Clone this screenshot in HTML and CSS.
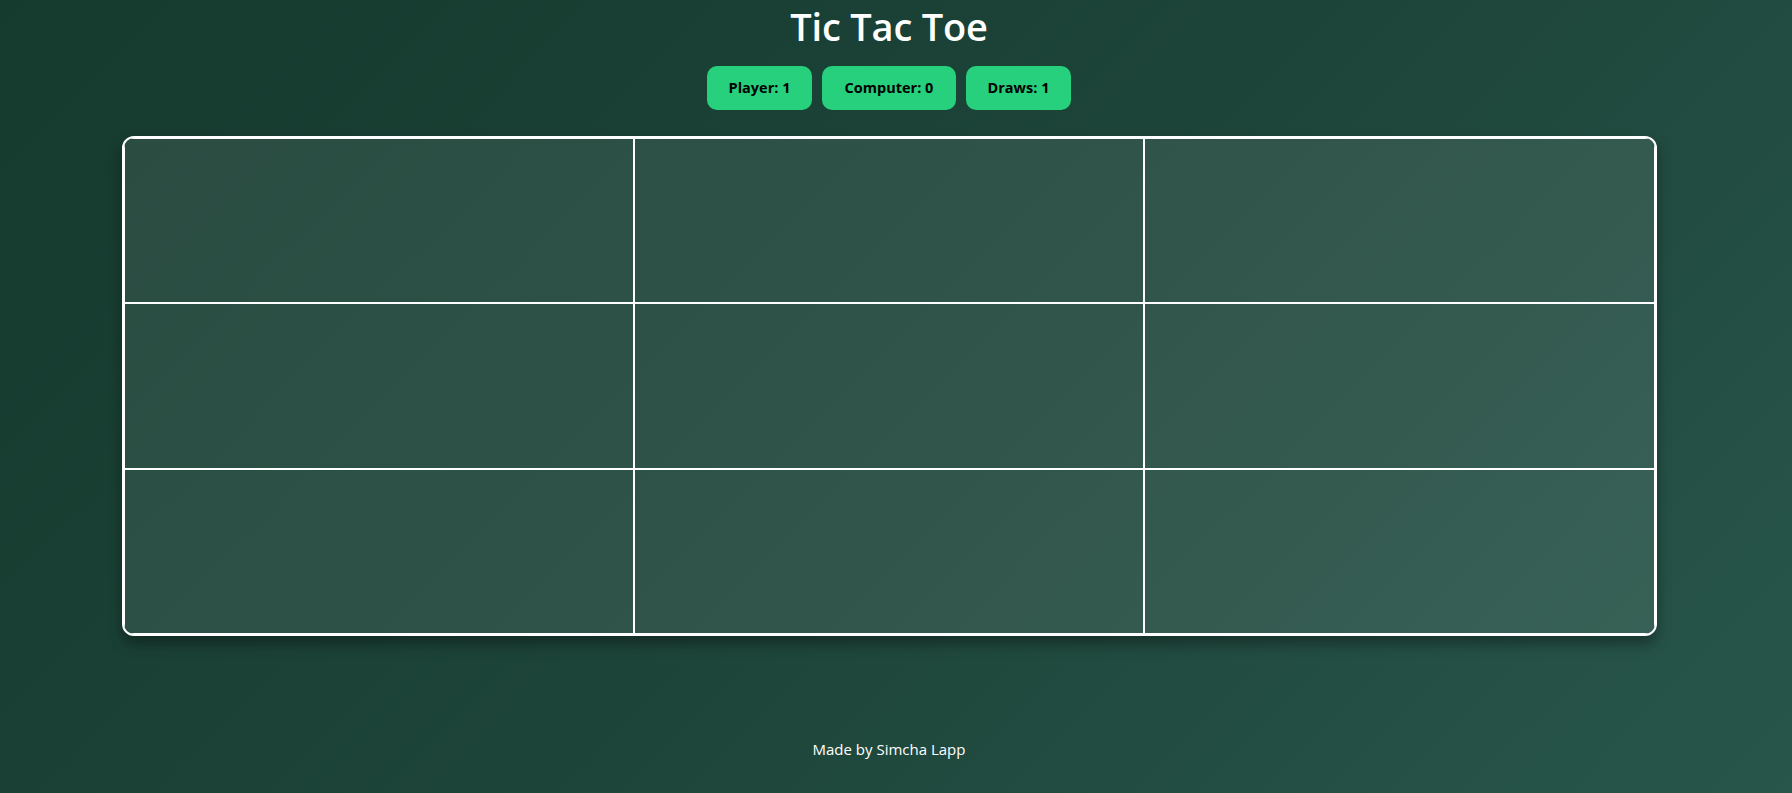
FILE: index.html
```html
<!DOCTYPE html>
<html lang="en">
<head>
<meta charset="utf-8">
<title>Tic Tac Toe</title>
<link rel="stylesheet" href="styles.css">
</head>
<body>
<div class="page">
  <h1 class="title">Tic Tac Toe</h1>
  <div class="scores">
    <div class="score score-player">Player: 1</div>
    <div class="score score-computer">Computer: 0</div>
    <div class="score score-draws">Draws: 1</div>
  </div>
  <div class="board">
    <div class="cell"></div><div class="cell"></div><div class="cell"></div>
    <div class="cell"></div><div class="cell"></div><div class="cell"></div>
    <div class="cell"></div><div class="cell"></div><div class="cell"></div>
  </div>
  <footer class="footer">Made by Simcha Lapp</footer>
</div>
</body>
</html>
```
FILE: styles.css
```css
* { box-sizing: border-box; }
html, body { height: 100%; }
body {
  margin: 0;
  background: linear-gradient(135deg, #153a2e 0%, #1d4439 50%, #28564b 100%);
  font-family: "Open Sans", "Noto Sans", sans-serif;
  color: #fff;
  overflow: hidden;
}
.page {
  width: 1778px;
  display: flex;
  flex-direction: column;
  align-items: center;
}
.title {
  margin: 0;
  margin-top: 1px;
  font-size: 38px;
  font-weight: 600;
  line-height: 50px;
  letter-spacing: -0.2px;
}
.scores {
  display: flex;
  gap: 10px;
  margin-top: 15px;
}
.score {
  background: #26d07c;
  color: #000;
  font-weight: 700;
  font-size: 14.5px;
  height: 44px;
  line-height: 44px;
  border-radius: 10px;
  text-align: center;
}
.score-player { width: 105px; }
.score-computer { width: 134px; }
.score-draws { width: 105px; }
.board {
  margin-top: 26px;
  width: 1535px;
  height: 500px;
  display: grid;
  grid-template-columns: repeat(3, 1fr);
  grid-template-rows: repeat(3, 1fr);
  border: 2px solid #fff;
  border-radius: 12px;
  overflow: hidden;
  background: rgba(255, 255, 255, 0.085);
  box-shadow: 0 8px 14px rgba(0, 0, 0, 0.35);
}
.cell {
  border: 1px solid #fff;
}
.footer {
  margin-top: 103px;
  font-size: 15px;
  line-height: 20px;
  color: #fff;
}
```
